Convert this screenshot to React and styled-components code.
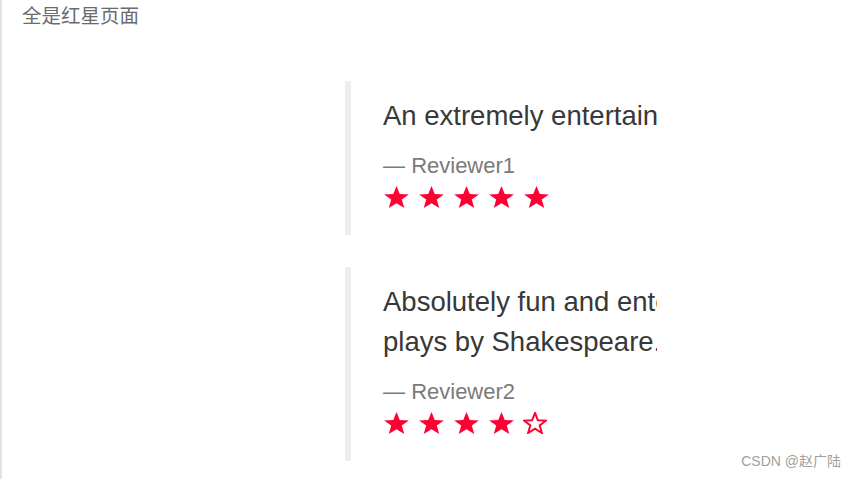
import React from 'react';
import styled, { createGlobalStyle } from 'styled-components';

const GlobalStyle = createGlobalStyle`
  html, body {
    margin: 0;
    padding: 0;
    background: #fff;
  }
  body {
    font-family: "Liberation Sans", Arial, "Noto Sans CJK SC", sans-serif;
  }
`;

const Page = styled.div`
  position: relative;
  min-height: 479px;
  box-sizing: border-box;
  border-left: 2px solid #dfe4ea;
  padding: 2px 0 0 20px;
  overflow: hidden;
`;

const Title = styled.div`
  font-family: "Noto Sans CJK SC", sans-serif;
  font-size: 19.5px;
  line-height: 26px;
  color: #6b6b6b;
`;

const ReviewList = styled.div`
  display: flex;
  flex-direction: column;
  gap: 32px;
  margin: 53px 0 0 323px;
`;

const Review = styled.blockquote`
  margin: 0;
  width: 312px;
  box-sizing: border-box;
  border-left: 6px solid #eeeeee;
  padding: 15px 0 26px 32px;
  overflow: hidden;
`;

const Quote = styled.p`
  margin: 0;
  font-size: 27.5px;
  line-height: 40px;
  color: #383838;
  white-space: nowrap;

  span {
    display: block;
  }
`;

const Cite = styled.div`
  margin-top: 15px;
  font-size: 22px;
  line-height: 30px;
  color: #7a7a7a;
`;

const Stars = styled.div`
  display: flex;
  margin-top: 4px;
  height: 24px;
`;

const StarSlot = styled.span`
  display: flex;
  align-items: center;
  width: 35px;
  flex: 0 0 35px;
`;

const Watermark = styled.div`
  position: absolute;
  right: 15px;
  bottom: 9px;
  font-size: 14px;
  color: #a0a0a0;
`;

const STAR = '12,1 14.9,8.6 23,9 16.7,14 18.9,22 12,17.5 5.1,22 7.3,14 1,9 9.1,8.6';

function Star({ filled }) {
  if (filled) {
    return (
      <svg width="27" height="24" viewBox="0 0 24 23" preserveAspectRatio="none">
        <polygon points={STAR} fill="#ff0033" />
      </svg>
    );
  }
  return (
    <svg width="24" height="22" viewBox="0 0 24 23" preserveAspectRatio="none">
      <polygon points={STAR} fill="none" stroke="#ff0033" strokeWidth="2" strokeLinejoin="miter" />
    </svg>
  );
}

const reviews = [
  {
    lines: ['An extremely entertaining play by Shakespeare.'],
    author: 'Reviewer1',
    rating: 5,
  },
  {
    lines: ['Absolutely fun and entertaining. One of the best', 'plays by Shakespeare.'],
    author: 'Reviewer2',
    rating: 4,
  },
];

export default function App() {
  return (
    <>
      <GlobalStyle />
      <Page>
        <Title>全是红星页面</Title>
        <ReviewList>
          {reviews.map((r) => (
            <Review key={r.author}>
              <Quote>
                {r.lines.map((l) => (
                  <span key={l}>{l}</span>
                ))}
              </Quote>
              <Cite>— {r.author}</Cite>
              <Stars>
                {[1, 2, 3, 4, 5].map((n) => (
                  <StarSlot key={n}>
                    <Star filled={n <= r.rating} />
                  </StarSlot>
                ))}
              </Stars>
            </Review>
          ))}
        </ReviewList>
        <Watermark>CSDN @赵广陆</Watermark>
      </Page>
    </>
  );
}
